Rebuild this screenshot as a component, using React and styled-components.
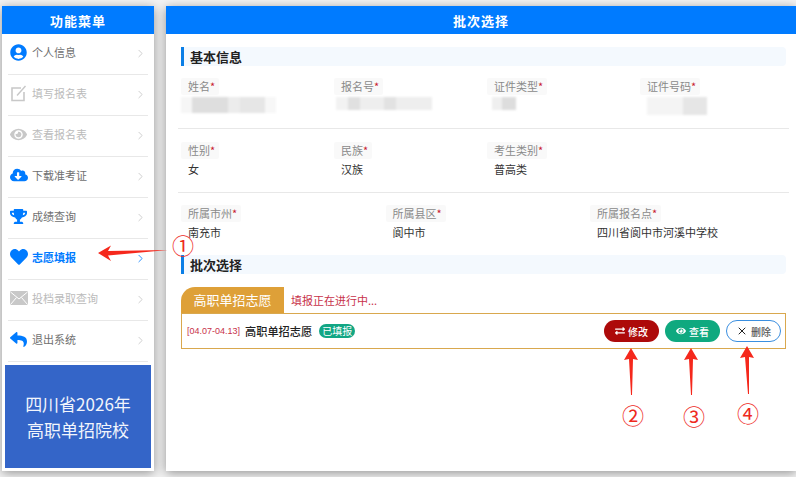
import React from 'react';
import styled, { createGlobalStyle } from 'styled-components';
import { FaUserCircle, FaEye, FaCloudDownloadAlt, FaTrophy, FaHeart, FaReply, FaExchangeAlt } from 'react-icons/fa';
import { ChevronRight, X } from 'lucide-react';

const GlobalStyle = createGlobalStyle`
  html, body { margin: 0; padding: 0; background: #f3f3f3; }
  body { font-family: "Noto Sans CJK SC", "Noto Sans", sans-serif; color: #333; }
  * { box-sizing: border-box; }
`;

const Page = styled.div`
  position: relative;
  width: 796px;
  height: 477px;
  overflow: hidden;
  display: flex;
  gap: 12px;
  padding: 6px 0 6px 2px;
`;

const Sidebar = styled.aside`
  width: 152px;
  flex: none;
  background: #fff;
  box-shadow: 0 2px 10px rgba(0, 0, 0, 0.4);
  display: flex;
  flex-direction: column;
`;

const BlueHeader = styled.div`
  height: 28px;
  flex: none;
  background: #007bff;
  color: #fff;
  font-size: 13px;
  font-weight: 700;
  letter-spacing: 1px;
  display: flex;
  align-items: center;
  justify-content: center;
`;

const MenuItem = styled.div`
  height: 41px;
  margin: 0 6px;
  flex: none;
  padding: 0 1px 4px 2px;
  display: flex;
  align-items: center;
  border-bottom: 1px solid #e8e8e8;
  font-size: 11px;
  font-weight: ${(p) => (p.$active ? 700 : 400)};
  color: ${(p) => (p.$active ? '#007bff' : p.$muted ? '#bbb' : '#707070')};
`;

const MenuIcon = styled.span`
  width: 22px;
  flex: none;
  display: flex;
  color: ${(p) => (p.$muted ? '#c8c8c8' : '#007bff')};
  font-size: ${(p) => p.$size || 17}px;
`;

const MenuLabel = styled.span`
  flex: 1;
  white-space: nowrap;
`;

const Chevron = styled(ChevronRight)`
  width: 13px;
  height: 13px;
  margin-top: 3px;
  color: ${(p) => (p.$active ? '#007bff' : '#c4c4c4')};
`;

const Banner = styled.div`
  margin: 3px 3px 0;
  height: 103px;
  background: #3465c8;
  color: #f2f5fc;
  font-size: 17px;
  line-height: 26px;
  text-align: center;
  display: flex;
  flex-direction: column;
  justify-content: center;
`;

const Main = styled.main`
  flex: 1;
  min-width: 0;
  background: #fff;
  box-shadow: 0 2px 10px rgba(0, 0, 0, 0.4);
  display: flex;
  flex-direction: column;
`;

const Content = styled.div`
  padding: 13px 10px 0 12px;
  display: flex;
  flex-direction: column;
`;

const SectionTitle = styled.h2`
  margin: 0 0 0 3px;
  height: 19px;
  padding-left: 6px;
  border-left: 3px solid #0a7ee6;
  border-radius: 0 4px 4px 0;
  background: #f4f9fe;
  color: #222;
  font-size: 13px;
  font-weight: 700;
  line-height: 19px;
`;

const FieldRow = styled.div`
  display: grid;
  grid-template-columns: ${(p) => (p.$cols === 3 ? 'repeat(3, 204.5px)' : 'repeat(4, 153px)')};
  height: ${(p) => p.$height}px;
  margin: 0 -3px 0 0;
  padding: ${(p) => p.$top}px 0 0 10px;
  border-bottom: ${(p) => (p.$plain ? 'none' : '1px solid #e8e8e8')};
`;

const Field = styled.div`
  display: flex;
  flex-direction: column;
  align-items: flex-start;
`;

const FieldLabel = styled.span`
  height: 17px;
  margin-left: -7px;
  padding: 0 4px 0 7px;
  background: #f9f9f9;
  border-radius: 2px;
  color: #8a8a8a;
  font-size: 11px;
  line-height: 17px;

  b {
    color: #c8202f;
    font-weight: 400;
  }
`;

const FieldValue = styled.span`
  margin-top: 2px;
  height: 17px;
  color: #333;
  font-size: 11px;
  line-height: 17px;
`;

const Mosaic = styled.div`
  margin-top: 2px;
  height: ${(p) => p.$height || 13}px;
  width: ${(p) => p.$width}px;
  margin-left: ${(p) => p.$offset || 0}px;
  background: ${(p) => p.$fill};
  filter: blur(1px);
`;

const Panel = styled.section`
  margin: 13px 0 0 3px;
`;

const TabRow = styled.div`
  display: flex;
  align-items: center;
  height: 26px;
`;

const Tab = styled.div`
  width: 103px;
  height: 26px;
  background: #dea038;
  border-radius: 14px 0 0 0;
  color: #fff;
  font-size: 13px;
  line-height: 26px;
  text-align: center;
`;

const TabNote = styled.span`
  margin-left: 7px;
  color: #c8324a;
  font-size: 11px;
`;

const BatchBox = styled.div`
  height: 36px;
  border: 1px solid #d9a84e;
  padding: 0 4px 0 5px;
  display: flex;
  align-items: center;
`;

const BatchDate = styled.span`
  color: #c8324a;
  font-family: "Liberation Sans", sans-serif;
  font-size: 9px;
`;

const BatchName = styled.span`
  margin-left: 5px;
  color: #222;
  font-size: 11.2px;
  font-weight: 500;
`;

const Status = styled.span`
  margin-left: 7px;
  height: 14px;
  padding: 0 3px;
  border-radius: 7px;
  background: #12a684;
  color: #fff;
  font-size: 10px;
  line-height: 14px;
`;

const Actions = styled.div`
  margin-left: auto;
  display: flex;
  gap: 6px;
`;

const PillButton = styled.button`
  width: 55px;
  height: 22px;
  padding: 0;
  border: 1px solid ${(p) => (p.$tone === 'outline' ? '#3b8fe0' : 'transparent')};
  border-radius: 11px;
  background: ${(p) => ({ danger: '#ad0a0a', success: '#0fa97f', outline: '#fff' }[p.$tone])};
  color: ${(p) => (p.$tone === 'outline' ? '#555' : '#fff')};
  font-family: inherit;
  font-size: 10px;
  font-weight: 500;
  display: flex;
  align-items: center;
  justify-content: center;
  gap: 3px;

  svg {
    width: ${(p) => (p.$tone === 'outline' ? 12 : 10)}px;
    height: ${(p) => (p.$tone === 'outline' ? 12 : 10)}px;
    color: ${(p) => (p.$tone === 'outline' ? '#222' : '#fff')};
  }
`;

const Annotations = styled.svg`
  position: absolute;
  left: 0;
  top: 0;
  width: 796px;
  height: 477px;
  pointer-events: none;
`;

const Marker = styled.span`
  position: absolute;
  left: ${(p) => p.$x - 14}px;
  top: ${(p) => p.$y - 15}px;
  width: 28px;
  height: 30px;
  color: #ee2a1e;
  font-family: "Noto Sans CJK SC", sans-serif;
  font-size: 22px;
  line-height: 30px;
  text-align: center;
`;

function EditGlyph() {
  return (
    <svg width="17" height="17" viewBox="0 0 17 17" fill="none" stroke="currentColor">
      <path d="M11 3H2v12.5h12V7" strokeWidth="1.6" />
      <path d="M7 10.5L15.5 1" strokeWidth="1.4" />
    </svg>
  );
}

function MailGlyph() {
  return (
    <svg width="18" height="14" viewBox="0 0 18 14">
      <rect width="18" height="14" rx="1" fill="currentColor" />
      <path d="M0.5 1L9 8l8.5-7M0.5 13.5L6.5 6.5M17.5 13.5L11.5 6.5" fill="none" stroke="#fff" strokeWidth="1" />
    </svg>
  );
}

const menu = [
  { label: '个人信息', Icon: FaUserCircle },
  { label: '填写报名表', Icon: EditGlyph, muted: true },
  { label: '查看报名表', Icon: FaEye, muted: true },
  { label: '下载准考证', Icon: FaCloudDownloadAlt, size: 18 },
  { label: '成绩查询', Icon: FaTrophy },
  { label: '志愿填报', Icon: FaHeart, active: true, size: 18 },
  { label: '投档录取查询', Icon: MailGlyph, muted: true },
  { label: '退出系统', Icon: FaReply },
];

const grayA = 'linear-gradient(90deg, #f6f6f6 0 12%, #dedede 12% 50%, #ececec 50% 62%, #e6e6e6 62% 88%, #f7f7f7 88%)';
const grayB = 'linear-gradient(90deg, #f2f2f2 0 12%, #e0e0e0 12% 25%, #eee 25% 50%, #e2e2e2 50% 62%, #eee 62%)';
const grayC = 'linear-gradient(90deg, #efefef 0 40%, #ddd 40%)';
const grayD = 'linear-gradient(90deg, #f4f4f4 0 60%, #e6e6e6 60%)';

function Label({ children }) {
  return <FieldLabel>{children}<b>*</b></FieldLabel>;
}

function Arrow({ points }) {
  return <polygon points={points} fill="#f5281c" />;
}

export default function App() {
  return (
    <Page>
      <GlobalStyle />
      <Sidebar>
        <BlueHeader>功能菜单</BlueHeader>
        {menu.map(({ label, Icon, muted, active, size }) => (
          <MenuItem key={label} $muted={muted} $active={active}>
            <MenuIcon $muted={muted} $size={size}><Icon /></MenuIcon>
            <MenuLabel>{label}</MenuLabel>
            <Chevron $active={active} strokeWidth={1.5} />
          </MenuItem>
        ))}
        <Banner>
          <div>四川省2026年</div>
          <div>高职单招院校</div>
        </Banner>
      </Sidebar>

      <Main>
        <BlueHeader>批次选择</BlueHeader>
        <Content>
          <SectionTitle>基本信息</SectionTitle>
          <FieldRow $height={63} $top={12}>
            <Field><Label>姓名</Label><Mosaic $width={95} $height={16} $offset={-7} $fill={grayA} /></Field>
            <Field><Label>报名号</Label><Mosaic $width={96} $offset={-5} $fill={grayB} /></Field>
            <Field><Label>证件类型</Label><Mosaic $width={24} $offset={-2} $fill={grayC} /></Field>
            <Field><Label>证件号码</Label><Mosaic $width={60} $height={18} $fill={grayD} /></Field>
          </FieldRow>
          <FieldRow $height={64} $top={13}>
            <Field><Label>性别</Label><FieldValue>女</FieldValue></Field>
            <Field><Label>民族</Label><FieldValue>汉族</FieldValue></Field>
            <Field><Label>考生类别</Label><FieldValue>普高类</FieldValue></Field>
          </FieldRow>
          <FieldRow $cols={3} $height={62} $top={12} $plain>
            <Field><Label>所属市州</Label><FieldValue>南充市</FieldValue></Field>
            <Field><Label>所属县区</Label><FieldValue>阆中市</FieldValue></Field>
            <Field><Label>所属报名点</Label><FieldValue>四川省阆中市河溪中学校</FieldValue></Field>
          </FieldRow>
          <SectionTitle>批次选择</SectionTitle>
          <Panel>
            <TabRow>
              <Tab>高职单招志愿</Tab>
              <TabNote>填报正在进行中...</TabNote>
            </TabRow>
            <BatchBox>
              <BatchDate>[04.07-04.13]</BatchDate>
              <BatchName>高职单招志愿</BatchName>
              <Status>已填报</Status>
              <Actions>
                <PillButton $tone="danger"><FaExchangeAlt />修改</PillButton>
                <PillButton $tone="success"><FaEye />查看</PillButton>
                <PillButton $tone="outline"><X strokeWidth={2} />删除</PillButton>
              </Actions>
            </BatchBox>
          </Panel>
        </Content>
      </Main>

      <Annotations viewBox="0 0 796 477">
        <Arrow points="98,253 111,245.5 108,251 168,250 108,255.5 111,261" />
        <Arrow points="631,348 638,360 633,359 632,395 631,395 629,359 624,360" />
        <Arrow points="691,348 698,360 693,359 692,395 691,395 689,359 684,360" />
        <Arrow points="747,346 754,358 749,357 749,394 748,394 745,357 740,358" />
      </Annotations>
      <Marker $x={183} $y={244}>①</Marker>
      <Marker $x={633} $y={414}>②</Marker>
      <Marker $x={694} $y={415}>③</Marker>
      <Marker $x={748} $y={412}>④</Marker>
    </Page>
  );
}
